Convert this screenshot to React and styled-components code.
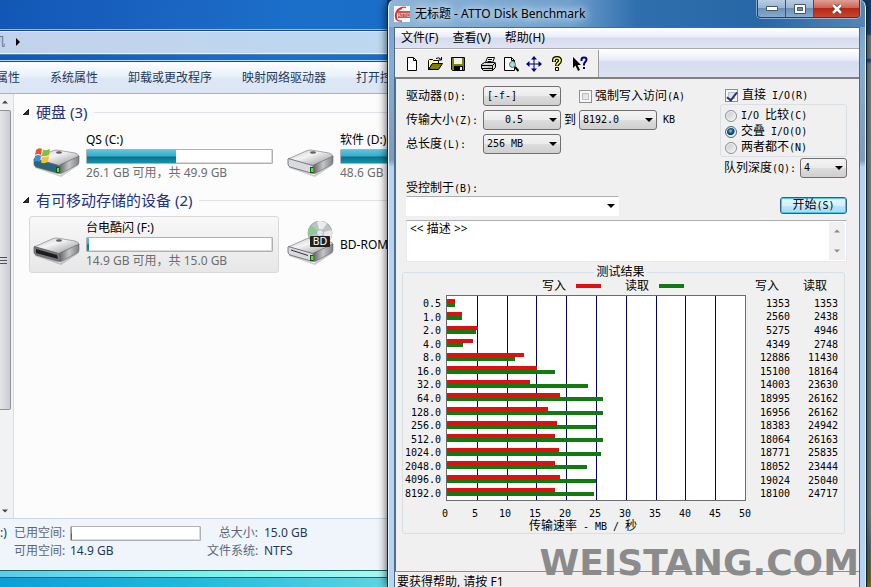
import React, { useState } from 'react';
import styled, { createGlobalStyle } from 'styled-components';

const GlobalStyle = createGlobalStyle`
  * {
    box-sizing: border-box;
  }

  body {
    margin: 0;
    overflow: hidden;
    background: #0a7fc0;
  }

  button, input, select, textarea {
    font: inherit;
    color: inherit;
    margin: 0;
  }
`;

const Desktop = styled.div`
  display: grid;
  grid-template-columns: minmax(0, 387fr) minmax(0, 480fr) 4px;
  height: 100vh;
  overflow: hidden;
  background: linear-gradient(#12406e 0, #1c5688 34px, #7d858c 36px, #85888c 58px, #1c4a78 60px, #8d9093 64px, #8b8e91 515px, #6d7178 550px, #77781f 580px);
  font: 12px/16px 'Noto Sans', 'Noto Sans CJK SC', sans-serif;
`;

/* ---------- explorer ---------- */

const Explorer = styled.section`
  display: flex;
  flex-direction: column;
  min-width: 0;
  overflow: hidden;
  white-space: nowrap;
  background: linear-gradient(90deg, #5cc8ee, #7af0ee 50%, #a8f6f0) 0 571px / 100% 7px no-repeat,
    linear-gradient(100deg, #1257b4 0%, #1a62c0 30%, #1b6fc9 60%, #1a6cc4 100%);
`;

const AddressBar = styled.div`
  display: flex;
  flex: none;
  align-items: center;
  gap: 11px;
  height: 24px;
  margin-top: 30px;
  border-top: 1px solid #1d4a86;
  border-bottom: 1px solid #e9f4fd;
  box-shadow: 0 -1px 0 #8fb9e6, inset 0 1px 0 #dcebfa, 0 1px 0 #4f86b8;
  background: linear-gradient(90deg, #c3d2ec, #bdd8f1);
  color: #5c6c82;
  overflow: hidden;
`;

const Crumb = styled.span`
  width: 5px;
  display: flex;
  justify-content: flex-end;
  overflow: hidden;
`;

const CommandBar = styled.nav`
  display: flex;
  flex: none;
  align-items: center;
  gap: 30px;
  height: 33px;
  margin-top: 7px;
  border-top: 1px solid #1d4a86;
  border-bottom: 1px solid #a3b1cc;
  box-shadow: 0 -1px 0 #b4d8f2;
  background: linear-gradient(#fdfeff, #e9f1fa 45%, #dde7f5 55%, #dce5f3);
  overflow: hidden;
`;

const Command = styled.button`
  flex: none;
  padding: 0;
  border: 0;
  background: none;
  color: #1e395b;

  &:first-child {
    margin-left: -28px;
  }
`;

const ExplorerBody = styled.div`
  display: flex;
  flex: none;
  height: 424px;
  background: #fcfcfd;
`;

const ScrollTrack = styled.div`
  display: flex;
  flex-direction: column;
  align-items: center;
  width: 14px;
  flex: none;
  padding: 6px 3px 5px 0;
  border-right: 1px solid #d5dfea;
  background: #f1f2f4;
`;

const ScrollThumb = styled.div`
  display: flex;
  flex-direction: column;
  justify-content: center;
  gap: 2px;
  width: 11px;
  height: 300px;
  margin: 6px 0 auto;
  border: 1px solid #8e9299;
  border-left: 0;
  border-radius: 0 2px 2px 0;
  background: linear-gradient(90deg, #e4e5e8, #c9ccd2);

  i {
    width: 7px;
    height: 1px;
    background: #4d5158;
  }
`;

const FileList = styled.main`
  flex: 1;
  min-width: 0;
  padding: 7px 0 0 9px;
  overflow: hidden;
`;

const GroupHead = styled.h2`
  display: flex;
  align-items: center;
  gap: 7px;
  height: 22px;
  margin: 0 0 5px;
  font-size: 15px;
  line-height: 22px;
  font-weight: 400;
  color: #1e3287;

  svg {
    flex: none;
  }

  &::after {
    content: '';
    flex: 1;
    height: 1px;
    background: #dfe1e6;
  }
`;

const Drives = styled.div`
  display: grid;
  grid-template-columns: repeat(2, 250px);
  gap: 4px;
  margin: 0 0 4px 6px;
`;

const DriveItem = styled.div`
  display: grid;
  grid-template-columns: 48px minmax(0, 1fr);
  align-items: center;
  gap: 5px;
  height: 57px;
  padding: 0 5px 0 3px;
  border: 1px solid ${(p) => (p.$selected ? '#d9d9d9' : 'transparent')};
  border-radius: 3px;
  background: ${(p) => (p.$selected ? 'linear-gradient(#f8f8f8, #e7e7e7)' : 'none')};
  color: #000;
`;

const DriveInfo = styled.div`
  display: flex;
  flex-direction: column;
  gap: 1px;

  small {
    font-size: 12px;
    color: #6d6d6d;
  }
`;

const Capacity = styled.div`
  height: 15px;
  border: 1px solid #aeb0b2;
  border-radius: 1px;
  box-shadow: inset -1px -1px 0 #dadada;
  background: #fff;
`;

const CapacityFill = styled.div`
  height: 100%;
  background: linear-gradient(#5cc4de 0, #37abc8 48%, #0a6f8b 52%, #1595ad 100%);
`;

const Details = styled.dl`
  display: grid;
  flex: none;
  grid-template-columns: 8px 50px 131px 51px 1fr;
  gap: 2px 6px;
  align-items: center;
  align-content: start;
  height: 53px;
  margin: 0;
  padding-top: 6px;
  border-top: 1px solid #ccd6e6;
  border-bottom: 1px solid #16665c;
  background: #f0f4fb;
  color: #1e395b;

  dt, dd {
    margin: 0;
  }

  dt {
    color: #5a6779;
    text-align: right;
  }
`;

const DesktopEdge = styled.div`
  flex: 1;
  margin-top: 6px;
  border-top: 1px solid #0e6e7c;
  background: linear-gradient(90deg, #0b9fd4, #22b9dc 50%, #5fd4e0);
`;

/* ---------- benchmark window ---------- */

const Window = styled.section`
  display: flex;
  flex-direction: column;
  min-width: 0;
  z-index: 1;
  padding: 0 6px;
  border: solid #16212c;
  border-width: 0 1px;
  border-radius: 7px 7px 0 0;
  box-shadow: 0 0 10px rgba(0, 0, 0, 0.75), inset 1px 0 0 #e4f2fd, inset -1px 0 0 #e4f2fd;
  background: linear-gradient(90deg, #8fb5d8 0, #6f9fcc 38%, #2f6fae 52%, #2767a6 78%, #5585b4 100%) 0 0 / 100% 27px no-repeat,
    linear-gradient(#6f9cc8 0, #86aed4 60px, #7f9cba 160px, #b5d3f3 167px, #b5d3f3 100%);
  color: #000;
  white-space: nowrap;
`;

const TitleBar = styled.header`
  display: flex;
  align-items: center;
  gap: 5px;
  height: 27px;
  flex: none;

  h1 {
    flex: 1;
    margin: 0;
    font-size: 12px;
    font-weight: 400;
    text-shadow: 0 0 6px #d8e9f7, 0 0 10px #c5dcf0, 0 0 12px #c5dcf0;
  }
`;

const Controls = styled.div`
  display: flex;
  align-self: flex-start;
  height: 18px;
  border: 1px solid #2b3e55;
  border-top: 0;
  border-radius: 0 0 4px 4px;
  box-shadow: 0 0 0 1px rgba(220, 235, 250, 0.5);
  overflow: hidden;
`;

const ControlButton = styled.button`
  display: grid;
  place-items: center;
  width: ${(p) => (p.$close ? 45 : 28)}px;
  padding: 0;
  border: 0;
  border-right: ${(p) => (p.$close ? 0 : '1px solid #3c536e')};
  background: ${(p) =>
    p.$close
      ? 'linear-gradient(#dda096, #cf6552 45%, #b32a14 50%, #c8452c)'
      : 'linear-gradient(#b9cde2, #9bb6d2 45%, #6c90b7 50%, #88abcf)'};
`;

const Client = styled.div`
  display: flex;
  flex-direction: column;
  flex: 1;
  border: 1px solid #4c6a8a;
  border-bottom: 0;
  background: #f0f0f0;
`;

const MenuBar = styled.nav`
  display: flex;
  align-items: center;
  gap: 14px;
  height: 21px;
  padding-left: 6px;
  border-bottom: 1px solid #a9a9b5;
  background: linear-gradient(#fff, #e9edf8 45%, #d6dcee 50%, #dfe4f3);

  button {
    padding: 0;
    border: 0;
    background: none;
  }
`;

const ToolBar = styled.div`
  display: flex;
  height: 30px;
  border-top: 1px solid #fff;
  border-bottom: 2px solid #808080;
  background: linear-gradient(#fff, #e9edf8 35%, #d6dcee 45%, #dde2f2);
`;

const ToolGroup = styled.div`
  display: flex;
  align-items: center;
  width: 204px;
  padding-left: 5px;
  border-right: 1px solid #9a9a9a;
  background: #f0f0f0;
`;

const ToolButton = styled.button`
  display: grid;
  place-items: center;
  width: 23px;
  height: 22px;
  padding: 0;
  border: 0;
  background: none;
  margin-left: ${(p) => (p.$gap ? 7 : 0)}px;
`;

const Pane = styled.form`
  display: flex;
  flex-direction: column;
  flex: 1;
  padding: 5px 12px 0 10px;
  border-left: 1px solid #696969;
  line-height: 14px;
`;

const Latin = styled.span`
  font-family: 'DejaVu Sans Mono', monospace;
  font-size: 10px;
`;

const Settings = styled.div`
  display: flex;
  justify-content: space-between;
`;

const Fields = styled.div`
  display: grid;
  grid-template-columns: 77px auto auto;
  grid-auto-rows: 24px;
  align-items: center;
  align-content: start;
`;

const Inline = styled.div`
  display: flex;
  align-items: center;
  gap: ${(p) => p.$gap || 3}px;
  padding-left: ${(p) => p.$indent || 0}px;
`;

const SelectBox = styled.div`
  display: grid;
  align-items: center;
  width: ${(p) => p.$width};

  select, svg {
    grid-area: 1 / 1;
  }

  svg {
    justify-self: end;
    margin-right: 4px;
    pointer-events: none;
  }
`;

const Select = styled.select`
  appearance: none;
  width: 100%;
  height: 20px;
  padding: 0 3px;
  border: 1px solid ${(p) => (p.$plain ? '#fff' : '#707070')};
  border-top-color: ${(p) => (p.$plain ? '#abadb3' : '#707070')};
  border-radius: ${(p) => (p.$plain ? 0 : 3)}px;
  background: ${(p) => (p.$plain ? '#fff' : 'linear-gradient(#f4f4f4, #ebebeb 50%, #dddddd 50%, #cfcfcf)')};
  font-family: 'DejaVu Sans Mono', monospace;
  font-size: 10px;
  text-indent: ${(p) => p.$indent || 0}px;
`;

const Check = styled.input`
  appearance: none;
  display: grid;
  place-items: center;
  width: 13px;
  height: 13px;
  border: 1px solid #8e8f8f;
  box-shadow: inset 0 0 0 2px #f6f6f6, inset 0 0 0 3px #b9c0c8;
  background: linear-gradient(135deg, #cfd4da, #f6f6f6);

  &:checked::after {
    content: '';
    width: 4px;
    height: 9px;
    border: solid #31347c;
    border-width: 0 2px 2px 0;
    transform: rotate(38deg);
  }
`;

const Radio = styled.input`
  appearance: none;
  width: 12px;
  height: 12px;
  border: 1px solid #8e8f8f;
  border-radius: 50%;
  box-shadow: inset 0 0 0 1px #f4f4f4;
  background: linear-gradient(135deg, #c3c8ce, #f6f6f6);

  &:checked {
    border-color: #4f6b82;
    background: radial-gradient(circle at 45% 40%, #8fd3ee 0, #1c6c9c 25%, #0d3350 45%, #dfe6ea 55%);
  }
`;

const IoSide = styled.div`
  display: flex;
  flex-direction: column;
  width: 127px;
  padding-top: 4px;
`;

const RadioGroup = styled.div`
  display: flex;
  flex-direction: column;
  gap: 1px;
  height: 53px;
  margin: 1px 0;
  padding: 3px 0 0 4px;
  border: 1px solid #dadfe3;
  border-radius: 3px;
`;

const StartRow = styled.div`
  display: flex;
  justify-content: space-between;
  align-items: flex-end;
  margin-top: 3px;
`;

const ControlledBy = styled.div`
  display: flex;
  flex-direction: column;
`;

const StartButton = styled.button`
  width: 67px;
  height: 17px;
  margin-bottom: 2px;
  padding: 0;
  border: 1px solid #2c628b;
  border-radius: 3px;
  box-shadow: inset 0 0 0 1px #3fc8f2;
  background: linear-gradient(#eaf6fc, #d6eef9 50%, #bee5f6 50%, #a6dbf2);
  line-height: 14px;
`;

const Description = styled.div`
  display: flex;
  height: 42px;
  margin-top: 4px;
  border: 1px solid #e3e9ef;
  border-top-color: #abadb3;
  background: #fff;

  textarea {
    flex: 1;
    padding: 0 3px;
    border: 0;
    outline: 0;
    resize: none;
    background: none;
    line-height: 16px;
    overflow: hidden;
  }
`;

const MiniScroll = styled.div`
  display: flex;
  flex-direction: column;
  justify-content: space-between;
  align-items: center;
  width: 16px;
  margin: 1px;
  padding: 7px 0;
  background: #f0f0f0;
`;

const Results = styled.fieldset`
  min-width: 0;
  margin: 3px 2px 0 -4px;
  padding: 0 6px 0 0;
  border: 1px solid #d5dfe5;
  border-radius: 3px;

  legend {
    margin: 0 auto;
    padding: 0 2px;
  }
`;

const ResultGrid = styled.div`
  display: grid;
  grid-template-columns: 38px minmax(0, 1fr) 87px;
  column-gap: 5px;
  padding-top: 1px;
`;

const Legend = styled.div`
  grid-column: 2;
  display: flex;
  gap: 24px;
  justify-content: center;
  height: 15px;
  padding: 0 0 3px 34px;
`;

const Key = styled.span`
  display: flex;
  align-items: center;
  gap: 10px;

  &::after {
    content: '';
    width: 25px;
    height: 4px;
    background: ${(p) => p.$color};
  }
`;

const SizeLabels = styled.div`
  display: grid;
  grid-template-rows: repeat(15, 1fr);
  align-items: center;
  justify-items: end;
  height: 206px;
  padding: 2px 0 1px;
  line-height: 13px;
`;

const Plot = styled.div`
  display: grid;
  height: 206px;
  border: 1px solid #6c6c6c;
  background: #fff;

  > * {
    grid-area: 1 / 1;
  }
`;

const GridLines = styled.div`
  display: grid;
  grid-template-columns: repeat(10, 1fr);

  i + i {
    border-left: 1px solid #00007f;
  }
`;

const Bars = styled.div`
  display: grid;
  grid-template-rows: repeat(15, 1fr);
  align-items: center;
  padding-bottom: 1px;
  z-index: 1;
`;

const Bar = styled.div`
  height: 4px;
  background: ${(p) => p.$color};
`;

const ValueTable = styled.table`
  grid-column: 3;
  grid-row: 1 / span 2;
  width: 100%;
  height: 221px;
  border-collapse: collapse;
  table-layout: fixed;

  th {
    height: 17px;
    padding: 0 11px 0 0;
    font-weight: 400;
    text-align: right;
    line-height: 12px;
    vertical-align: top;
  }

  th:first-child {
    width: 39px;
  }

  td {
    padding: 0;
    text-align: right;
    font: 10px/12px 'DejaVu Sans Mono', monospace;
  }
`;

const Axis = styled.div`
  grid-column: 2;
  display: flex;
  justify-content: space-between;
  margin: 6px -8px 0 -10px;

  span {
    width: 18px;
    text-align: center;
  }
`;

const AxisTitle = styled.div`
  grid-column: 2;
  height: 12px;
  padding-right: 26px;
  text-align: center;
  line-height: 10px;
`;

const Watermark = styled.div`
  position: absolute;
  right: 12px;
  bottom: 4px;
  z-index: 2;
  font: bold 36px/40px 'DejaVu Sans', sans-serif;
  color: #8b8b8b;
  pointer-events: none;
`;

const StatusBar = styled.footer`
  height: 16px;
  padding-left: 2px;
  border-top: 1px solid #8d8d8d;
  background: #f1eeed;
  line-height: 20px;
  overflow: hidden;
`;

const WRITE = '#e01010';
const READ = '#107c10';

const results = [
  ['0.5', 1353, 1353],
  ['1.0', 2560, 2438],
  ['2.0', 5275, 4946],
  ['4.0', 4349, 2748],
  ['8.0', 12886, 11430],
  ['16.0', 15100, 18164],
  ['32.0', 14003, 23630],
  ['64.0', 18995, 26162],
  ['128.0', 16956, 26162],
  ['256.0', 18383, 24942],
  ['512.0', 18064, 26163],
  ['1024.0', 18771, 25835],
  ['2048.0', 18052, 23444],
  ['4096.0', 19024, 25040],
  ['8192.0', 18100, 24717],
];

const ticks = [0, 5, 10, 15, 20, 25, 30, 35, 40, 45, 50];
const commands = ['卸载属性', '系统属性', '卸载或更改程序', '映射网络驱动器', '打开控制面板'];

// 50 MB/s spans the whole plot
const barWidth = (kb) => `${kb / 500}%`;

const Arrow = ({ up, color = '#000', size = 8 }) => (
  <svg width={size} height="4" viewBox="0 0 8 4" aria-hidden="true">
    <path d={up ? 'M0 4 4 0 8 4Z' : 'M0 0 8 0 4 4Z'} fill={color} />
  </svg>
);

const Expander = () => (
  <svg width="6" height="6" viewBox="0 0 6 6" aria-hidden="true">
    <path d="M6 0V6H0Z" fill="#333" stroke="#111" />
  </svg>
);

const DriveIcon = ({ kind }) => (
  <svg width="48" height="48" viewBox="0 0 48 48" aria-hidden="true">
    <defs>
      <linearGradient id={`top-${kind}`} x1="0" y1="0" x2="1" y2="1">
        <stop offset="0" stopColor="#bcbcbe" />
        <stop offset="0.4" stopColor="#f4f4f5" />
        <stop offset="1" stopColor="#8f9093" />
      </linearGradient>
      <linearGradient id={`side-${kind}`} x1="0" y1="0" x2="1" y2="0">
        <stop offset="0" stopColor="#606164" />
        <stop offset="0.5" stopColor="#c4c5c8" />
        <stop offset="1" stopColor="#808185" />
      </linearGradient>
    </defs>
    <path d="M2 32 27 42 46 29V32L28 44 2 35Z" fill="#000" opacity="0.18" />
    <path d="M1 26 19 18Q21 17 24 17L42 20Q46 21 46 24L27 32Q24 33 21 32Z" fill={`url(#top-${kind})`} stroke="#85868a" strokeWidth="0.7" />
    <path d="M27 32 46 23V29Q46 31 44 32L29 40Q27 41 26 40V33Z" fill={`url(#side-${kind})`} stroke="#55565a" strokeWidth="0.5" />
    <path
      d="M1 26Q1 25 3 26L24 32Q27 33 27 35V39Q27 41 24 40L3 34Q1 33 1 31Z"
      fill={kind === 'win' ? '#27677b' : kind === 'usb' ? '#77787c' : '#d9d9e0'}
      stroke="#5e5f63"
      strokeWidth="0.8"
    />
    <ellipse cx="26" cy="19.5" rx="3" ry="1.2" fill="#626367" />
    {kind === 'usb' ? (
      <path d="M3 28 24 34 25 38 3 32Z" fill="#1b1b1c" />
    ) : (
      <>
        <path d="M23 34h3.500v6h-3.500z" fill="#1d4f1d" />
        <path d="M24 35h2v4h-2z" fill="#5ae02e" />
      </>
    )}
    {kind === 'win' && (
      <>
        <path d="M3 17Q6 14 9 16L8 22Q5 20 2 22Z" fill="#e5562a" />
        <path d="M10 16.5Q13 18 17 16L16 22Q12 24 9 22.5Z" fill="#84bd3c" />
        <path d="M2 23Q5 21 8 23L7 29Q4 27 1 29Z" fill="#3f8fd8" />
        <path d="M9 23.5Q12 25 16 23L15 29Q11 31 8 29.5Z" fill="#f5c32c" />
      </>
    )}
    {kind === 'bd' && (
      <>
        <path d="M4 29 21 34.5" stroke="#333" strokeWidth="1" />
        <circle cx="33" cy="12" r="12" fill="#bfc2c4" stroke="#8f9294" strokeWidth="0.7" />
        <path d="M33 12 24 4A12 12 0 0 0 21.500 15Z" fill="#8fc894" />
        <path d="M33 12 30 0.500A12 12 0 0 1 40 2.500Z" fill="#ececee" />
        <path d="M33 12 44.500 9A12 12 0 0 1 43.500 18Z" fill="#e9e6ee" />
        <circle cx="33" cy="12" r="3.500" fill="#dfe6ee" stroke="#9a9da0" strokeWidth="0.7" />
        <rect x="23" y="15" width="20" height="11" rx="1" fill="#1f1f20" />
        <text x="33" y="24" textAnchor="middle" fontFamily="DejaVu Sans" fontSize="10" fill="#fff">BD</text>
      </>
    )}
  </svg>
);

const AttoLogo = () => (
  <svg width="16" height="16" viewBox="0 0 16 16" aria-hidden="true">
    <rect width="16" height="16" fill="#fbf6f5" />
    <path d="M12 1.500C7 0 2 4 1.500 9S4 15.500 8 15M3 13C1 9 3 4 8 2.500" fill="none" stroke="#d8343a" strokeWidth="1.300" />
    <rect x="4" y="5" width="12" height="7" fill="#c25a58" />
    <text x="10" y="10.500" textAnchor="middle" fontFamily="Liberation Sans" fontSize="5" fill="#f6dcda">ATTO</text>
  </svg>
);

const toolIcons = [
  {
    name: '新建',
    art: <path d="M3.500 1.500h6l3 3v10h-9zM9.500 1.500v3h3" fill="#fff" stroke="#000" />,
  },
  {
    name: '打开',
    art: (
      <>
        <path d="M1.500 13.500v-9l1-1h3l1 1h5v3h-6z" fill="#ffff80" stroke="#000" />
        <path d="M1.500 13.500l4-6h10l-4 6z" fill="#808000" stroke="#000" />
        <path d="M9 2.500q3-2 5 1M14.500 1v3h-3" fill="none" stroke="#000" />
      </>
    ),
  },
  {
    name: '保存',
    art: (
      <>
        <path d="M1.500 1.500h13v13h-12l-1-1z" fill="#808000" stroke="#000" />
        <path d="M4 2h8v6H4z" fill="#f0f0f0" />
        <path d="M4 10h9v5H4z" fill="#000" />
        <path d="M10 11h2v3h-2z" fill="#f0f0f0" />
      </>
    ),
  },
  {
    name: '打印',
    gap: true,
    art: (
      <>
        <path d="M5.500 6.500l2-5h7l-2 5z" fill="#fff" stroke="#000" />
        <path d="M8 3.500h4M7.500 5.500h4" stroke="#000" />
        <path d="M1.500 8.500l3-2h10l1 1v4l-3 3h-9l-2-2z" fill="#d8d8d8" stroke="#000" />
        <path d="M1.500 9.500h11l3-3M2 12.500h10.500M12.500 9.500v5" fill="none" stroke="#000" />
        <path d="M8 11h3" stroke="#c8b400" />
      </>
    ),
  },
  {
    name: '打印预览',
    art: (
      <>
        <path d="M1.500 1.500h7l3 3v10h-10z" fill="#fff" stroke="#000" />
        <path d="M8.500 1.500v3h3" fill="none" stroke="#000" />
        <circle cx="9.500" cy="8.500" r="3" fill="#a8dede" stroke="#4b6868" />
        <path d="M12 11l3.500 4" stroke="#000" strokeWidth="2" />
      </>
    ),
  },
  {
    name: '移动',
    art: (
      <>
        <path d="M8 2v12M2 8h12" fill="none" stroke="#000080" />
        <path d="M8 0l3 3.500H5zM8 16l3-3.500H5zM0 8l3.500-3v6zM16 8l-3.500-3v6z" fill="#000080" />
      </>
    ),
  },
  {
    name: '关于',
    art: (
      <>
        <path d="M5 6V4q0-2 3-2t3 2.500q0 1.500-1.500 2.500T8 10" fill="none" stroke="#000" strokeWidth="4" />
        <path d="M5 5.500V4q0-2 3-2t3 2.500q0 1.500-1.500 2.500T8 9.500" fill="none" stroke="#ffff30" strokeWidth="1.700" />
        <path d="M6.500 11.500h3v3h-3z" fill="#ffff30" stroke="#000" />
      </>
    ),
  },
  {
    name: '帮助',
    art: (
      <>
        <path d="M1 1v11l2.500-2.500L6 15l2-1-2.500-5H9z" fill="#000" />
        <path d="M9.500 5V3.500q0-2 2.500-2t2.500 2q0 1.500-1.200 2.300T12 8.500v1" fill="none" stroke="#000080" strokeWidth="2" />
        <path d="M11 11h2v2h-2z" fill="#000080" />
      </>
    ),
  },
];

const Dropdown = ({ id, width = '78px', options, indent, plain }) => (
  <SelectBox $width={width}>
    <Select id={id} $indent={indent} $plain={plain} defaultValue={options[0]}>
      {options.map((o) => (
        <option key={o}>{o}</option>
      ))}
    </Select>
    <Arrow />
  </SelectBox>
);

const DriveWithSpace = ({ kind, name, space, used, selected }) => (
  <DriveItem $selected={selected}>
    <DriveIcon kind={kind} />
    <DriveInfo>
      <span>{name}</span>
      <Capacity>
        <CapacityFill style={{ width: used }} />
      </Capacity>
      <small>{space}</small>
    </DriveInfo>
  </DriveItem>
);

const ExplorerWindow = () => (
  <Explorer>
    <AddressBar>
      <Crumb>机</Crumb>
      <svg width="4" height="8" viewBox="0 0 4 8" aria-hidden="true">
        <path d="M0 0 4 4 0 8Z" fill="#000" />
      </svg>
    </AddressBar>
    <CommandBar>
      {commands.map((c) => (
        <Command key={c} type="button">{c}</Command>
      ))}
    </CommandBar>
    <ExplorerBody>
      <ScrollTrack>
        <Arrow up size={6} color="#444" />
        <ScrollThumb>
          <i />
          <i />
          <i />
        </ScrollThumb>
        <Arrow size={6} color="#444" />
      </ScrollTrack>
      <FileList>
        <GroupHead><Expander />硬盘 (3)</GroupHead>
        <Drives>
          <DriveWithSpace kind="win" name="QS (C:)" space="26.1 GB 可用，共 49.9 GB" used="48%" />
          <DriveWithSpace kind="hdd" name="软件 (D:)" space="48.6 GB 可用，共 99.9 GB" used="51%" />
        </Drives>
        <GroupHead><Expander />有可移动存储的设备 (2)</GroupHead>
        <Drives>
          <DriveWithSpace kind="usb" name="台电酷闪 (F:)" space="14.9 GB 可用，共 15.0 GB" used="1%" selected />
          <DriveItem>
            <DriveIcon kind="bd" />
            <span>BD-ROM</span>
          </DriveItem>
        </Drives>
      </FileList>
    </ExplorerBody>
    <Details>
      <dd>:)</dd>
      <dt>已用空间:</dt>
      <dd>
        <Capacity>
          <CapacityFill style={{ width: '1%' }} />
        </Capacity>
      </dd>
      <dt>总大小:</dt>
      <dd>15.0 GB</dd>
      <dd />
      <dt>可用空间:</dt>
      <dd>14.9 GB</dd>
      <dt>文件系统:</dt>
      <dd>NTFS</dd>
    </Details>
    <DesktopEdge />
  </Explorer>
);

const ResultsPanel = () => (
  <Results>
    <legend>测试结果</legend>
    <ResultGrid>
      <Legend>
        <Key $color={WRITE}>写入</Key>
        <Key $color={READ}>读取</Key>
      </Legend>
      <SizeLabels>
        {results.map(([size]) => (
          <Latin key={size}>{size}</Latin>
        ))}
      </SizeLabels>
      <Plot>
        <GridLines>
          {ticks.slice(1).map((t) => (
            <i key={t} />
          ))}
        </GridLines>
        <Bars>
          {results.map(([size, write, read]) => (
            <div key={size}>
              <Bar $color={WRITE} style={{ width: barWidth(write) }} />
              <Bar $color={READ} style={{ width: barWidth(read) }} />
            </div>
          ))}
        </Bars>
      </Plot>
      <ValueTable>
        <thead>
          <tr>
            <th>写入</th>
            <th>读取</th>
          </tr>
        </thead>
        <tbody>
          {results.map(([size, write, read]) => (
            <tr key={size}>
              <td>{write}</td>
              <td>{read}</td>
            </tr>
          ))}
        </tbody>
      </ValueTable>
      <Axis>
        {ticks.map((t) => (
          <Latin key={t}>{t}</Latin>
        ))}
      </Axis>
      <AxisTitle>传输速率<Latin> - MB / </Latin>秒</AxisTitle>
    </ResultGrid>
  </Results>
);

const BenchmarkWindow = () => {
  const [forced, setForced] = useState(false);
  const [direct, setDirect] = useState(true);
  const [mode, setMode] = useState('O');

  const modes = [
    ['C', <><Latin>I/O </Latin>比较<Latin>(C)</Latin></>],
    ['O', <>交叠<Latin> I/O(O)</Latin></>],
    ['N', <>两者都不<Latin>(N)</Latin></>],
  ];

  return (
    <Window>
      <TitleBar>
        <AttoLogo />
        <h1>无标题 - ATTO Disk Benchmark</h1>
        <Controls>
          <ControlButton type="button" aria-label="最小化">
            <svg width="12" height="5" viewBox="0 0 12 5"><path d="M.5.5h11v4H.5z" fill="#fff" stroke="#44576c" /></svg>
          </ControlButton>
          <ControlButton type="button" aria-label="最大化">
            <svg width="12" height="10" viewBox="0 0 12 10">
              <path d="M.5.5h11v9H.5zM3.500 3.500h5v3h-5z" fill="#fff" fillRule="evenodd" stroke="#44576c" />
            </svg>
          </ControlButton>
          <ControlButton type="button" aria-label="关闭" $close>
            <svg width="12" height="10" viewBox="0 0 12 10">
              <path d="M2 1l8 8M10 1l-8 8" stroke="#5b3030" strokeWidth="4" />
              <path d="M2 1l8 8M10 1l-8 8" stroke="#fff" strokeWidth="2.500" />
            </svg>
          </ControlButton>
        </Controls>
      </TitleBar>
      <Client>
        <MenuBar>
          <button type="button">文件(F)</button>
          <button type="button">查看(V)</button>
          <button type="button">帮助(H)</button>
        </MenuBar>
        <ToolBar>
          <ToolGroup>
            {toolIcons.map(({ name, gap, art }) => (
              <ToolButton key={name} type="button" aria-label={name} $gap={gap}>
                <svg width="16" height="16" viewBox="0 0 16 16">{art}</svg>
              </ToolButton>
            ))}
          </ToolGroup>
        </ToolBar>
        <Pane onSubmit={(e) => e.preventDefault()}>
          <Settings>
            <Fields>
              <label htmlFor="drive">驱动器<Latin>(D):</Latin></label>
              <Dropdown id="drive" options={['[-f-]']} />
              <Inline $indent={18}>
                <Check id="forced" type="checkbox" checked={forced} onChange={() => setForced(!forced)} />
                <label htmlFor="forced">强制写入访问<Latin>(A)</Latin></label>
              </Inline>
              <label htmlFor="from">传输大小<Latin>(Z):</Latin></label>
              <Dropdown id="from" options={['0.5']} indent={18} />
              <Inline $indent={3}>
                <label htmlFor="to">到</label>
                <Dropdown id="to" options={['8192.0']} />
                <Inline $indent={3}><Latin>KB</Latin></Inline>
              </Inline>
              <label htmlFor="length">总长度<Latin>(L):</Latin></label>
              <Dropdown id="length" options={['256 MB']} />
            </Fields>
            <IoSide>
              <Inline $indent={5} $gap={4}>
                <Check id="direct" type="checkbox" checked={direct} onChange={() => setDirect(!direct)} />
                <label htmlFor="direct">直接<Latin> I/O(R)</Latin></label>
              </Inline>
              <RadioGroup>
                {modes.map(([value, text]) => (
                  <Inline key={value} $gap={4}>
                    <Radio
                      id={`mode-${value}`}
                      type="radio"
                      name="mode"
                      checked={mode === value}
                      onChange={() => setMode(value)}
                    />
                    <label htmlFor={`mode-${value}`}>{text}</label>
                  </Inline>
                ))}
              </RadioGroup>
              <Inline $indent={4} $gap={4}>
                <label htmlFor="depth">队列深度<Latin>(Q):</Latin></label>
                <Dropdown id="depth" width="47px" options={['4']} />
              </Inline>
            </IoSide>
          </Settings>
          <StartRow>
            <ControlledBy>
              <label htmlFor="controlled">受控制于<Latin>(B):</Latin></label>
              <Dropdown id="controlled" width="213px" options={['']} plain />
            </ControlledBy>
            <StartButton type="submit">开始<Latin>(S)</Latin></StartButton>
          </StartRow>
          <Description>
            <textarea aria-label="描述" defaultValue="<< 描述 >>" />
            <MiniScroll>
              <Arrow up size={6} color="#8a8a8a" />
              <Arrow size={6} color="#8a8a8a" />
            </MiniScroll>
          </Description>
          <ResultsPanel />
        </Pane>
        <StatusBar>要获得帮助, 请按 F1</StatusBar>
      </Client>
    </Window>
  );
};

const App = () => (
  <>
    <GlobalStyle />
    <Desktop>
      <ExplorerWindow />
      <BenchmarkWindow />
    </Desktop>
    <Watermark>WEISTANG.COM</Watermark>
  </>
);

export default App;
